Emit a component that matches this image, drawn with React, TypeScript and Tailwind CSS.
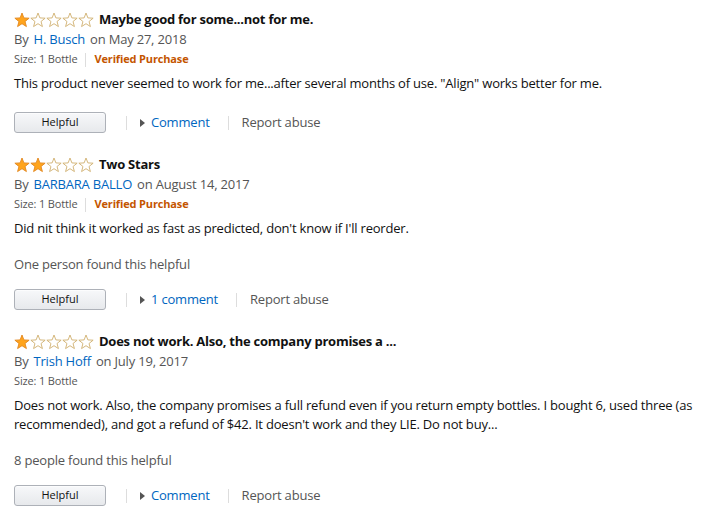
import type { ReactNode } from "react";

type Review = {
  rating: number;
  title: string;
  author: string;
  date: string;
  verified: boolean;
  body: ReactNode;
  helpful?: string;
  comment: string;
};

const reviews: Review[] = [
  {
    rating: 1,
    title: "Maybe good for some...not for me.",
    author: "H. Busch",
    date: "May 27, 2018",
    verified: true,
    body: 'This product never seemed to work for me...after several months of use. "Align" works better for me.',
    comment: "Comment",
  },
  {
    rating: 2,
    title: "Two Stars",
    author: "BARBARA BALLO",
    date: "August 14, 2017",
    verified: true,
    body: "Did nit think it worked as fast as predicted, don't know if I'll reorder.",
    helpful: "One person found this helpful",
    comment: "1 comment",
  },
  {
    rating: 1,
    title: "Does not work. Also, the company promises a ...",
    author: "Trish Hoff",
    date: "July 19, 2017",
    verified: false,
    body: "Does not work. Also, the company promises a full refund even if you return empty bottles. I bought 6, used three (as recommended), and got a refund of $42. It doesn't work and they LIE. Do not buy...",
    helpful: "8 people found this helpful",
    comment: "Comment",
  },
];

const STAR =
  "8,1 9.88,5.91 15.13,6.18 11.04,9.49 12.41,14.57 8,11.7 3.59,14.57 4.96,9.49 0.87,6.18 6.12,5.91";

function Stars({ rating }: { rating: number }) {
  return (
    <div className="flex items-center">
      {[0, 1, 2, 3, 4].map((i) => (
        <svg key={i} width="16" height="16" viewBox="0 0 16 16" className="shrink-0">
          {i < rating ? (
            <polygon points={STAR} fill="#FFA41C" stroke="#E2871E" strokeWidth="0.9" strokeLinejoin="round" />
          ) : (
            <polygon points={STAR} fill="#ffffff" stroke="#CFAF6E" strokeWidth="0.9" strokeLinejoin="round" />
          )}
        </svg>
      ))}
    </div>
  );
}

function ReviewBlock({ review }: { review: Review }) {
  return (
    <div className="pb-[21px]">
      <div className="flex h-[20px] items-center pt-px">
        <Stars rating={review.rating} />
        <span className="ml-[5px] text-[13px] font-bold tracking-[-0.25px] text-[#111111]">{review.title}</span>
      </div>
      <div className="flex h-[21px] items-center text-[13px] tracking-[-0.2px] text-[#555555]">
        <span>By</span>
        <span className="ml-[5px] text-[#0066c0]">{review.author}</span>
        <span className="ml-[5px]">on {review.date}</span>
      </div>
      <div className="flex h-[19px] items-center text-[11px] tracking-[-0.15px] text-[#555555]">
        <span>Size: 1 Bottle</span>
        {review.verified && (
          <>
            <span className="mx-[8px] h-[14px] w-px bg-[#dddddd]" />
            <span className="font-bold text-[#c45500]">Verified Purchase</span>
          </>
        )}
      </div>
      <p className="mt-[5px] text-[13px] leading-[19px] tracking-[-0.2px] text-[#111111]">{review.body}</p>
      {review.helpful && (
        <p className="mt-[17px] text-[13px] leading-[19px] tracking-[-0.2px] text-[#555555]">{review.helpful}</p>
      )}
      <div className={`flex items-center ${review.helpful ? "mt-[15px]" : "mt-[19px]"}`}>
        <button
          type="button"
          className="h-[21px] w-[92px] rounded-[3px] border border-[#adb1b8] bg-gradient-to-b from-[#f7f8fa] to-[#e7e9ec] text-[11px] text-[#111111] shadow-[inset_0_1px_0_rgba(255,255,255,0.6)]"
        >
          Helpful
        </button>
        <span className="ml-[20px] h-[14px] w-px bg-[#dddddd]" />
        <span className="ml-[13px] h-0 w-0 border-y-[4px] border-l-[5px] border-y-transparent border-l-[#555555]" />
        <span className="ml-[6px] text-[13px] tracking-[-0.2px] text-[#0066c0]">{review.comment}</span>
        <span className="ml-[18px] h-[14px] w-px bg-[#dddddd]" />
        <span className="ml-[13px] text-[13px] tracking-[-0.2px] text-[#555555]">Report abuse</span>
      </div>
    </div>
  );
}

export default function App() {
  return (
    <div
      className="min-h-[518px] w-[703px] bg-white pl-[14px] pr-[4px] pt-[9px]"
      style={{ fontFamily: '"Open Sans", Arial, sans-serif' }}
    >
      {reviews.map((review) => (
        <ReviewBlock key={review.title} review={review} />
      ))}
    </div>
  );
}
